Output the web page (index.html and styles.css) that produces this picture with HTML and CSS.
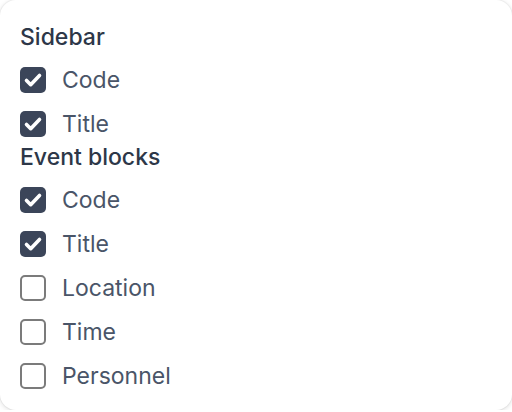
FILE: index.html
```html
<!DOCTYPE html>
<html lang="en">
<head>
    <meta charset="UTF-8">
    <meta name="viewport" content="width=device-width, initial-scale=1.0">
    <title>Display options</title>
    <link rel="stylesheet" href="styles.css">
</head>
<body>
    <div class="panel">
        <section class="group">
            <h3>Sidebar</h3>
            <div class="options">
                <label class="option">
                    <span class="box checked">
                        <svg viewBox="0 0 26 26"><path d="M6.5 13.5l4.2 4.2 8.8-9.2"/></svg>
                    </span>
                    Code
                </label>
                <label class="option">
                    <span class="box checked">
                        <svg viewBox="0 0 26 26"><path d="M6.5 13.5l4.2 4.2 8.8-9.2"/></svg>
                    </span>
                    Title
                </label>
            </div>
        </section>

        <section class="group">
            <h3>Event blocks</h3>
            <div class="options">
                <label class="option">
                    <span class="box checked">
                        <svg viewBox="0 0 26 26"><path d="M6.5 13.5l4.2 4.2 8.8-9.2"/></svg>
                    </span>
                    Code
                </label>
                <label class="option">
                    <span class="box checked">
                        <svg viewBox="0 0 26 26"><path d="M6.5 13.5l4.2 4.2 8.8-9.2"/></svg>
                    </span>
                    Title
                </label>
                <label class="option">
                    <span class="box"></span>
                    Location
                </label>
                <label class="option">
                    <span class="box"></span>
                    Time
                </label>
                <label class="option">
                    <span class="box"></span>
                    Personnel
                </label>
            </div>
        </section>
    </div>
</body>
</html>
```

FILE: styles.css
```css
body {
    margin: 0;
    background-color: #ffffff;
    font-family: 'Inter', 'Noto Sans', sans-serif;
}

.panel {
    background-color: #ffffff;
    border-radius: 16px;
    box-shadow: 0 1px 5px rgba(0, 0, 0, 0.14), 0 0 0 1px rgba(0, 0, 0, 0.03);
    padding: 23px 20px 21px;
    display: flex;
    flex-direction: column;
    gap: 6px;
}

.group h3 {
    margin: 0 0 16px;
    font-size: 23px;
    line-height: 28px;
    font-weight: 500;
    color: #2d3748;
}

.options {
    display: flex;
    flex-direction: column;
    gap: 18px;
}

.option {
    display: flex;
    align-items: center;
    gap: 16px;
    height: 26px;
    font-size: 23px;
    color: #4a5568;
}

.box {
    box-sizing: border-box;
    width: 26px;
    height: 26px;
    border: 2px solid #7b7b7b;
    border-radius: 5px;
    display: flex;
    flex-shrink: 0;
}

.box.checked {
    border: none;
    background-color: #3b4559;
}

.box svg {
    width: 26px;
    height: 26px;
    fill: none;
    stroke: #ffffff;
    stroke-width: 3.6;
    stroke-linecap: round;
    stroke-linejoin: round;
}
```
